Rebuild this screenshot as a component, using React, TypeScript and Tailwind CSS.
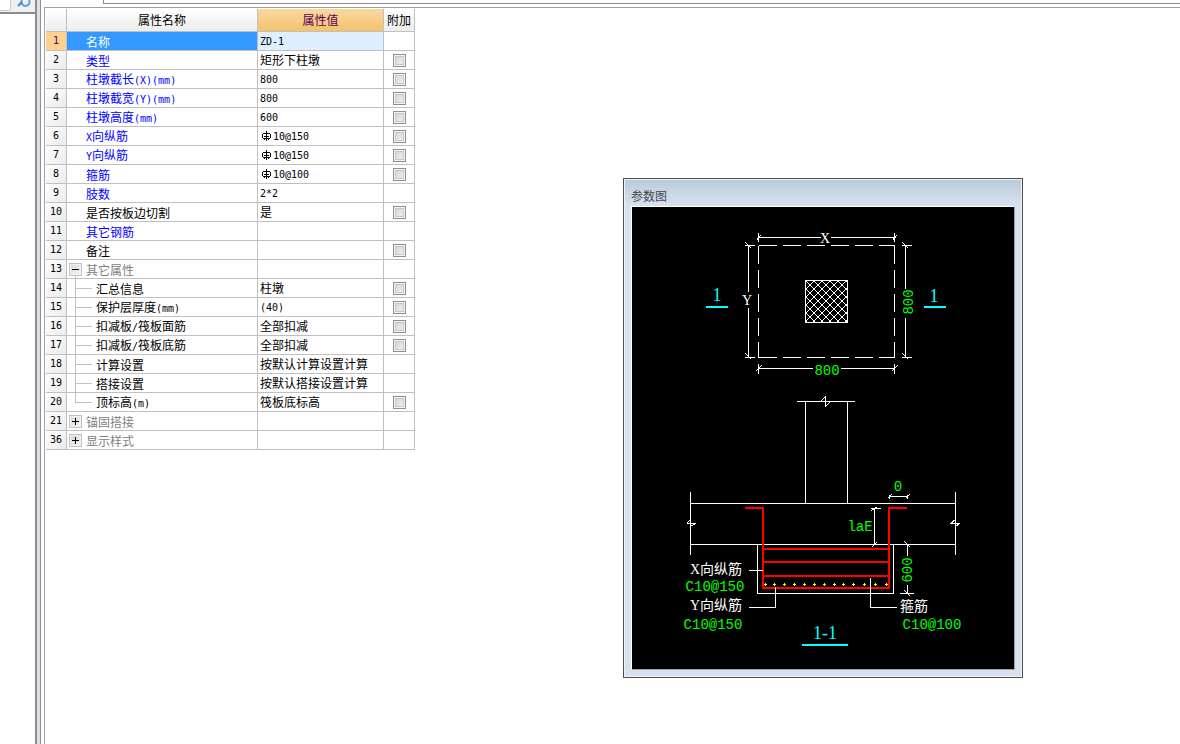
import type { ReactNode } from "react";

type Row = {
  no: number;
  name: string;
  value?: string;
  rebar?: boolean;
  tone?: "blue" | "gray";
  check?: boolean;
  tree?: "child" | "last" | "open" | "closed";
};

const rows: Row[] = [
  { no: 1, name: "名称", value: "ZD-1" },
  { no: 2, name: "类型", value: "矩形下柱墩", tone: "blue", check: true },
  { no: 3, name: "柱墩截长(X)(mm)", value: "800", tone: "blue", check: true },
  { no: 4, name: "柱墩截宽(Y)(mm)", value: "800", tone: "blue", check: true },
  { no: 5, name: "柱墩高度(mm)", value: "600", tone: "blue", check: true },
  { no: 6, name: "X向纵筋", value: "10@150", rebar: true, tone: "blue", check: true },
  { no: 7, name: "Y向纵筋", value: "10@150", rebar: true, tone: "blue", check: true },
  { no: 8, name: "箍筋", value: "10@100", rebar: true, tone: "blue", check: true },
  { no: 9, name: "肢数", value: "2*2", tone: "blue" },
  { no: 10, name: "是否按板边切割", value: "是", check: true },
  { no: 11, name: "其它钢筋", tone: "blue" },
  { no: 12, name: "备注", check: true },
  { no: 13, name: "其它属性", tone: "gray", tree: "open" },
  { no: 14, name: "汇总信息", value: "柱墩", check: true, tree: "child" },
  { no: 15, name: "保护层厚度(mm)", value: "(40)", check: true, tree: "child" },
  { no: 16, name: "扣减板/筏板面筋", value: "全部扣减", check: true, tree: "child" },
  { no: 17, name: "扣减板/筏板底筋", value: "全部扣减", check: true, tree: "child" },
  { no: 18, name: "计算设置", value: "按默认计算设置计算", tree: "child" },
  { no: 19, name: "搭接设置", value: "按默认搭接设置计算", tree: "child" },
  { no: 20, name: "顶标高(m)", value: "筏板底标高", check: true, tree: "last" },
  { no: 21, name: "锚固搭接", tone: "gray", tree: "closed" },
  { no: 36, name: "显示样式", tone: "gray", tree: "closed" },
];

const MONO = "font-['DejaVu_Sans_Mono',monospace] text-[10px]";

// latin runs are half the width of a CJK glyph
function Mixed({ text }: { text: string }) {
  return (
    <span className="whitespace-nowrap">
      {text.split(/([\x20-\x7e]+)/).map((part, i) =>
        i % 2 ? <span key={i} className={MONO}>{part}</span> : part
      )}
    </span>
  );
}

function RebarMark() {
  return (
    <svg
      className="mr-0.5 ml-0.5 shrink-0"
      width="9"
      height="10"
      fill="none"
      stroke="#000"
      shapeRendering="crispEdges"
      aria-hidden="true"
    >
      <path d="M4.5 0V10M1 2.5H8M1 7.5H8M0.5 3V7M8.5 3V7M2 5.5H7M2.5 7V9M6.5 7V9" />
    </svg>
  );
}

function TreeGutter({ tree, name }: { tree?: Row["tree"]; name: string }) {
  if (tree === "child" || tree === "last") {
    return (
      <span className="mr-1 ml-2 flex h-full w-[17px] shrink-0 flex-col">
        <span className="h-[10px] border-b border-l border-[#c0c0c0]" />
        {tree === "child" && <span className="flex-1 border-l border-[#c0c0c0]" />}
      </span>
    );
  }
  if (!tree) return <span className="w-[19px] shrink-0" />;
  return (
    <span className="mr-1 ml-0.5 flex h-full w-[13px] shrink-0 flex-col items-center pt-[3px]">
      <button
        aria-label={name}
        aria-expanded={tree === "open"}
        className="grid size-[13px] shrink-0 place-items-center border border-[#c0c0c0] bg-linear-to-br from-[#d2d6da] to-[#f6f6f6] shadow-[inset_0_0_0_1px_#f2f2f2]"
      >
        <svg width="7" height="7" stroke="#000" shapeRendering="crispEdges" aria-hidden="true">
          <path d={tree === "open" ? "M0 3.5H7" : "M0 3.5H7M3.5 0V7"} />
        </svg>
      </button>
      {tree === "open" && <span className="w-px flex-1 bg-[#c0c0c0]" />}
    </span>
  );
}

function nameColor(row: Row) {
  if (row.no === 1) return "bg-[#3399ff] text-white";
  if (row.tone === "blue") return "text-[#0000ff]";
  if (row.tone === "gray") return "text-[#808080]";
  return "text-black";
}

function PropertyTable() {
  const cell = "border-r border-b border-[#c0c0c0] p-0";
  return (
    <table className="w-[369px] table-fixed border-separate border-spacing-0 text-xs">
      <colgroup>
        <col className="w-[21px]" />
        <col className="w-[191px]" />
        <col className="w-[126px]" />
        <col className="w-[31px]" />
      </colgroup>
      <thead>
        <tr className="h-[23px] bg-linear-to-b from-white to-[#ececec]">
          <td className={cell} />
          <th scope="col" className={`${cell} font-normal`}>属性名称</th>
          <th scope="col" className={`${cell} bg-linear-to-b from-[#f9d9a1] to-[#f2c26b] font-normal text-[#5a005a]`}>
            属性值
          </th>
          <th scope="col" className={`${cell} font-normal`}>附加</th>
        </tr>
      </thead>
      <tbody>
        {rows.map((row) => (
          <tr key={row.no}>
            <th
              scope="row"
              className={`${cell} ${MONO} font-normal ${
                row.no === 1 ? "bg-[#ffd38f] text-[#5a005a]" : "bg-linear-to-br from-white to-[#ebebeb] text-black"
              }`}
            >
              {row.no}
            </th>
            <td className={`${cell} ${nameColor(row)}`}>
              <div className="flex h-[18px] items-center leading-[18px]">
                <TreeGutter tree={row.tree} name={row.name} />
                <span className="pt-0.5">
                  <Mixed text={row.name} />
                </span>
              </div>
            </td>
            <td className={`${cell} ${row.no === 1 ? "bg-[#e0efff]" : ""}`}>
              <div className="flex h-[18px] items-center pl-0.5 leading-[18px]">
                {row.rebar && <RebarMark />}
                {row.value && <Mixed text={row.value} />}
              </div>
            </td>
            <td className={cell}>
              <div className="flex h-[18px] items-center justify-center">
                {row.check && (
                  <input
                    type="checkbox"
                    aria-label={`附加 ${row.name}`}
                    className="size-[13px] appearance-none border border-[#8e8f8f] bg-linear-to-br from-[#cbcfd5] to-[#f6f6f6] shadow-[inset_0_0_0_1px_#f4f4f4,inset_0_0_0_2px_#c4c8cd]"
                  />
                )}
              </div>
            </td>
          </tr>
        ))}
      </tbody>
    </table>
  );
}

const dots = [133, 142, 152, 162, 172, 182, 192, 202, 211, 221, 232, 243, 254];

function Label({ x, y, turn, children }: { x: number; y: number; turn?: boolean; children: ReactNode }) {
  return (
    <text x={x} y={y} textAnchor="middle" transform={turn ? `rotate(-90 ${x} ${y})` : undefined}>
      {children}
    </text>
  );
}

function SectionDrawing() {
  return (
    <svg viewBox="0 0 382 462" width="382" height="462" className="block bg-black" role="img" aria-label="柱墩参数图">
      <defs>
        <pattern id="hatch" width="8" height="8" x="174" y="74" patternUnits="userSpaceOnUse">
          <path d="M-1 -1L9 9M9 -1L-1 9" stroke="#fff" strokeWidth="1.2" shapeRendering="crispEdges" />
        </pattern>
      </defs>

      <rect x="174" y="74" width="41" height="41" fill="url(#hatch)" />

      <g transform="translate(0.5 0.5)" fill="none" stroke="#fff" shapeRendering="crispEdges">
        {/* plan outline and column */}
        <path strokeDasharray="18 6" d="M126 38H262M126 150H262M126 38V150M262 38V150" />
        <rect x="173" y="73" width="42" height="42" />

        {/* plan dimensions */}
        <path d="M126 30H188M198 30H262M126 25V34M262 25V34M124 33L128 28M260 33L264 28" />
        <path d="M126 161H180M208 161H262M126 156V166M262 156V166M123 164L129 158M259 164L265 158" />
        <path d="M116 38V84M116 100V150M112 38H122M112 150H122M113 35L119 41M113 146L119 152" />
        <path d="M273 38V81M273 110V150M269 38H279M269 150H279M270 35L276 41M270 146L276 152" />

        {/* column stub with break mark */}
        <path d="M164 194H222M173 194V296M215 194V296M188 194L193 189V199L198 194" />

        {/* slab */}
        <path d="M58 296H323M58 337H323M58 284V347M323 284V347" />
        <path d="M54 316H63M54 316L58 312M58 319L63 316M318 316H327M318 316L323 312M323 319L327 316" />

        {/* pier below the slab */}
        <path d="M125 337V386H261V337" />

        {/* section dimensions */}
        <path d="M242 301V337M238 301H248M239 303L245 299M239 340L244 335" />
        <path d="M257 289H275M257 287V291M275 287V291M255 291L259 287M273 291L277 287" />
        <path d="M275 337V348M275 377V386M267 386H281M272 334L278 340M272 383L278 389" />
      </g>

      <g fill="none" stroke="#f00" strokeWidth="2" shapeRendering="crispEdges">
        <path d="M113 301H131V381H257V301H275M131 342H257M131 355H257M131 369H257" />
      </g>

      <g transform="translate(0.5 0.5)" fill="none" shapeRendering="crispEdges">
        <path stroke="#fff" d="M116 363H130M143 379V400H116M238 370V400H264" />
        {dots.map((x) => (
          <path key={x} stroke="#ff0" d={`M${x - 1.5} 377H${x + 1.5}M${x} 375.5V378.5`} />
        ))}
      </g>

      <g fill="#0ff" className="font-['Liberation_Serif',serif] text-[18px]">
        <Label x={85} y={94}>1</Label>
        <rect x="74" y="99" width="22" height="2" />
        <Label x={302} y={95}>1</Label>
        <rect x="292" y="99" width="22" height="2" />
        <Label x={193} y={432}>1-1</Label>
        <rect x="170" y="437" width="46" height="2" />
      </g>

      <g fill="#fff" className="font-['Liberation_Serif','Noto_Sans_CJK_SC',serif] text-[14px]">
        <Label x={193} y={36}>X</Label>
        <Label x={115} y={98}>Y</Label>
        <Label x={84} y={367}>X向纵筋</Label>
        <Label x={84} y={403}>Y向纵筋</Label>
        <Label x={282} y={404}>箍筋</Label>
      </g>

      <g fill="#0f0" className="font-['Liberation_Mono',monospace] text-[14px]">
        <Label x={195} y={168}>800</Label>
        <Label x={281} y={95} turn>800</Label>
        <Label x={266} y={284}>0</Label>
        <Label x={228} y={324}>laE</Label>
        <Label x={280} y={363} turn>600</Label>
        <Label x={83} y={384}>C10@150</Label>
        <Label x={81} y={422}>C10@150</Label>
        <Label x={300} y={422}>C10@100</Label>
      </g>
    </svg>
  );
}

function DiagramWindow() {
  return (
    <section
      aria-labelledby="diagram-title"
      className="absolute top-[178px] left-[623px] border border-[#4c4f55] bg-[#d7e2ef] shadow-[inset_0_0_0_1px_#eef3f9]"
    >
      <h2
        id="diagram-title"
        className="m-px mb-0 h-[26px] bg-linear-to-b from-[#bccbd9] to-[#d7e2ef] pt-1.5 pl-1.5 text-xs leading-5 text-[#43484e]"
      >
        参数图
      </h2>
      <div className="mx-[7px] mb-[7px] border border-t-white border-r-[#a0a0a0] border-b-[#a0a0a0] border-l-white">
        <SectionDrawing />
      </div>
    </section>
  );
}

export default function App() {
  return (
    <div className="relative flex h-screen overflow-hidden bg-white font-['Noto_Sans_CJK_SC',sans-serif] text-black">
      <aside className="flex w-[37px] shrink-0 flex-col border-r-2 border-[#8c8c8c]">
        <div className="flex h-[14px] border-b-2 border-[#8c8c8c] bg-[#f0f0f0]">
          <input aria-label="搜索" className="h-[11px] w-[11px] rounded-br-xs border-r border-b border-[#c8ccd4] bg-white" />
          <button aria-label="搜索" className="ml-1.5 h-[7px] overflow-hidden">
            <svg width="14" height="7" fill="none" stroke="#5aa2dc" strokeWidth="2">
              <path d="M5 0A4 4 0 1 0 12 0" />
              <path d="M5 2L1 6" stroke="#3f86c8" />
            </svg>
          </button>
        </div>
      </aside>
      <div className="w-1 shrink-0 border-r border-[#8a9099] bg-[#dcdfe4]" />
      <main className="ml-[3px] flex flex-1 flex-col">
        <div className="h-[7px]">
          <div className="ml-[59px] h-1 border-b border-l border-[#8c8e94]" />
        </div>
        <div className="flex-1 border-t border-l border-[#a0a0a0] pt-px pl-px">
          <PropertyTable />
        </div>
      </main>
      <DiagramWindow />
    </div>
  );
}
